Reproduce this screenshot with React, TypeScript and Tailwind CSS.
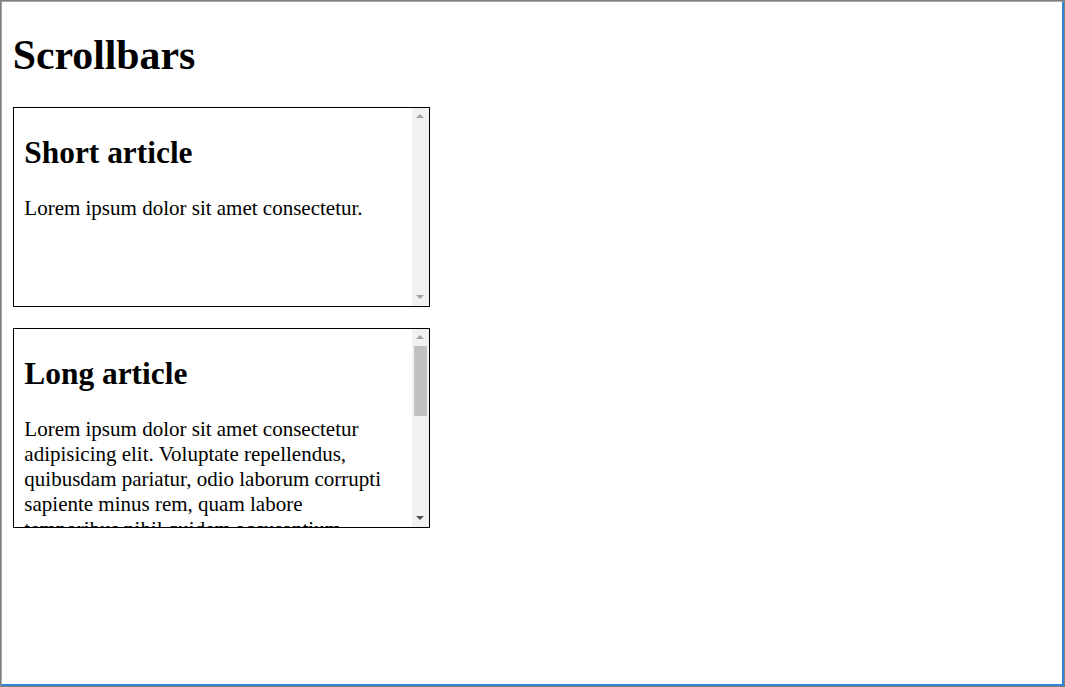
import React from "react";

function ScrollBar({ thumb, downActive }: { thumb?: boolean; downActive?: boolean }) {
  return (
    <div className="flex w-[17px] shrink-0 flex-col bg-[#f1f1f1]">
      <div className="flex h-[17px] items-center justify-center">
        <svg width="8" height="5" viewBox="0 0 8 5">
          <polygon points="4,0 8,4 0,4" fill="#a3a3a3" />
        </svg>
      </div>
      <div className="flex-1 px-[2px]">
        {thumb ? <div className="h-[70px] w-full bg-[#c1c1c1]" /> : null}
      </div>
      <div className="flex h-[17px] items-center justify-center">
        <svg width="8" height="5" viewBox="0 0 8 5">
          <polygon points="0,0 8,0 4,4" fill={downActive ? "#505050" : "#a3a3a3"} />
        </svg>
      </div>
    </div>
  );
}

function Box({ title, text, long }: { title: string; text: string; long?: boolean }) {
  return (
    <div className="mb-[21px] flex h-[200px] w-[417px] border border-black">
      <div className="min-w-0 flex-1 overflow-hidden px-[10.67px]">
        <h2 className="mt-[26.5px] mb-[25px] text-[31.4px] font-bold leading-[36.8px]">{title}</h2>
        <p className="text-[21px] leading-[25px]">{text}</p>
      </div>
      <ScrollBar thumb={long} downActive={long} />
    </div>
  );
}

export default function App() {
  return (
    <div
      className="flex h-[687px] w-[1065px] flex-col border border-[#7f7f7f] bg-white text-black"
      style={{ fontFamily: '"Liberation Serif", "Times New Roman", serif' }}
    >
      <div className="flex-1 border-l border-t border-l-[#a8a8a8] border-t-[#a8a8a8] border-r-2 border-b-2 border-r-[#2f86d6] border-b-[#2f86d6] px-[10.67px]">
        <h1 className="mt-[28.6px] mb-[27.6px] text-[41.8px] font-bold leading-[49px]">Scrollbars</h1>
        <Box title="Short article" text="Lorem ipsum dolor sit amet consectetur." />
        <Box
          long
          title="Long article"
          text="Lorem ipsum dolor sit amet consectetur adipisicing elit. Voluptate repellendus, quibusdam pariatur, odio laborum corrupti sapiente minus rem, quam labore temporibus nihil quidem accusantium, dolorem aspernatur! Quia sint nihil, perspiciatis est recusandae, numquam sit beatae voluptatem dolorum, cupiditate fugit eum."
        />
      </div>
    </div>
  );
}
